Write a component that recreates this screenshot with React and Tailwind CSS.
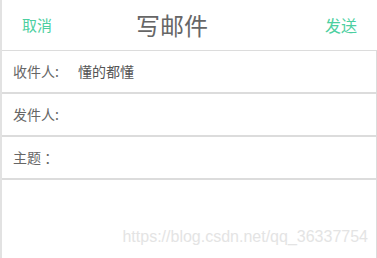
import React from "react";

const font = { fontFamily: '"Noto Sans CJK SC", "Noto Sans", sans-serif' };

function Row({ label, value }) {
  return (
    <div className="flex items-center h-[43px] border-t border-b border-r border-[#dcdcdc] text-[14px] text-[#666]">
      <span className="pl-[11px] w-[76px] shrink-0">{label}</span>
      <span className="text-[#555]">{value}</span>
    </div>
  );
}

export default function App() {
  return (
    <div className="w-[377px] h-[258px] bg-white border-l-2 border-[#e2e2e2] overflow-hidden" style={font}>
      <header className="flex items-center h-[50px]">
        <button className="ml-[20px] text-[15px] text-[#4ccfa0]">取消</button>
        <h1 className="ml-[84px] text-[24px] text-[#666] leading-none">写邮件</h1>
        <button className="ml-auto mr-[20px] text-[16px] text-[#4ccfa0]">发送</button>
      </header>
      <form className="flex flex-col">
        <Row label="收件人:" value="懂的都懂" />
        <Row label="发件人:" value="" />
        <Row label="主题 ：" value="" />
        <div className="relative h-[80px] border-t border-r border-[#dcdcdc]">
          <span
            className="absolute right-[8px] top-[45px] text-[16px] text-[#e4e4e4]"
            style={{ fontFamily: '"Liberation Sans", Arial, sans-serif' }}
          >
            https://blog.csdn.net/qq_36337754
          </span>
        </div>
      </form>
    </div>
  );
}
